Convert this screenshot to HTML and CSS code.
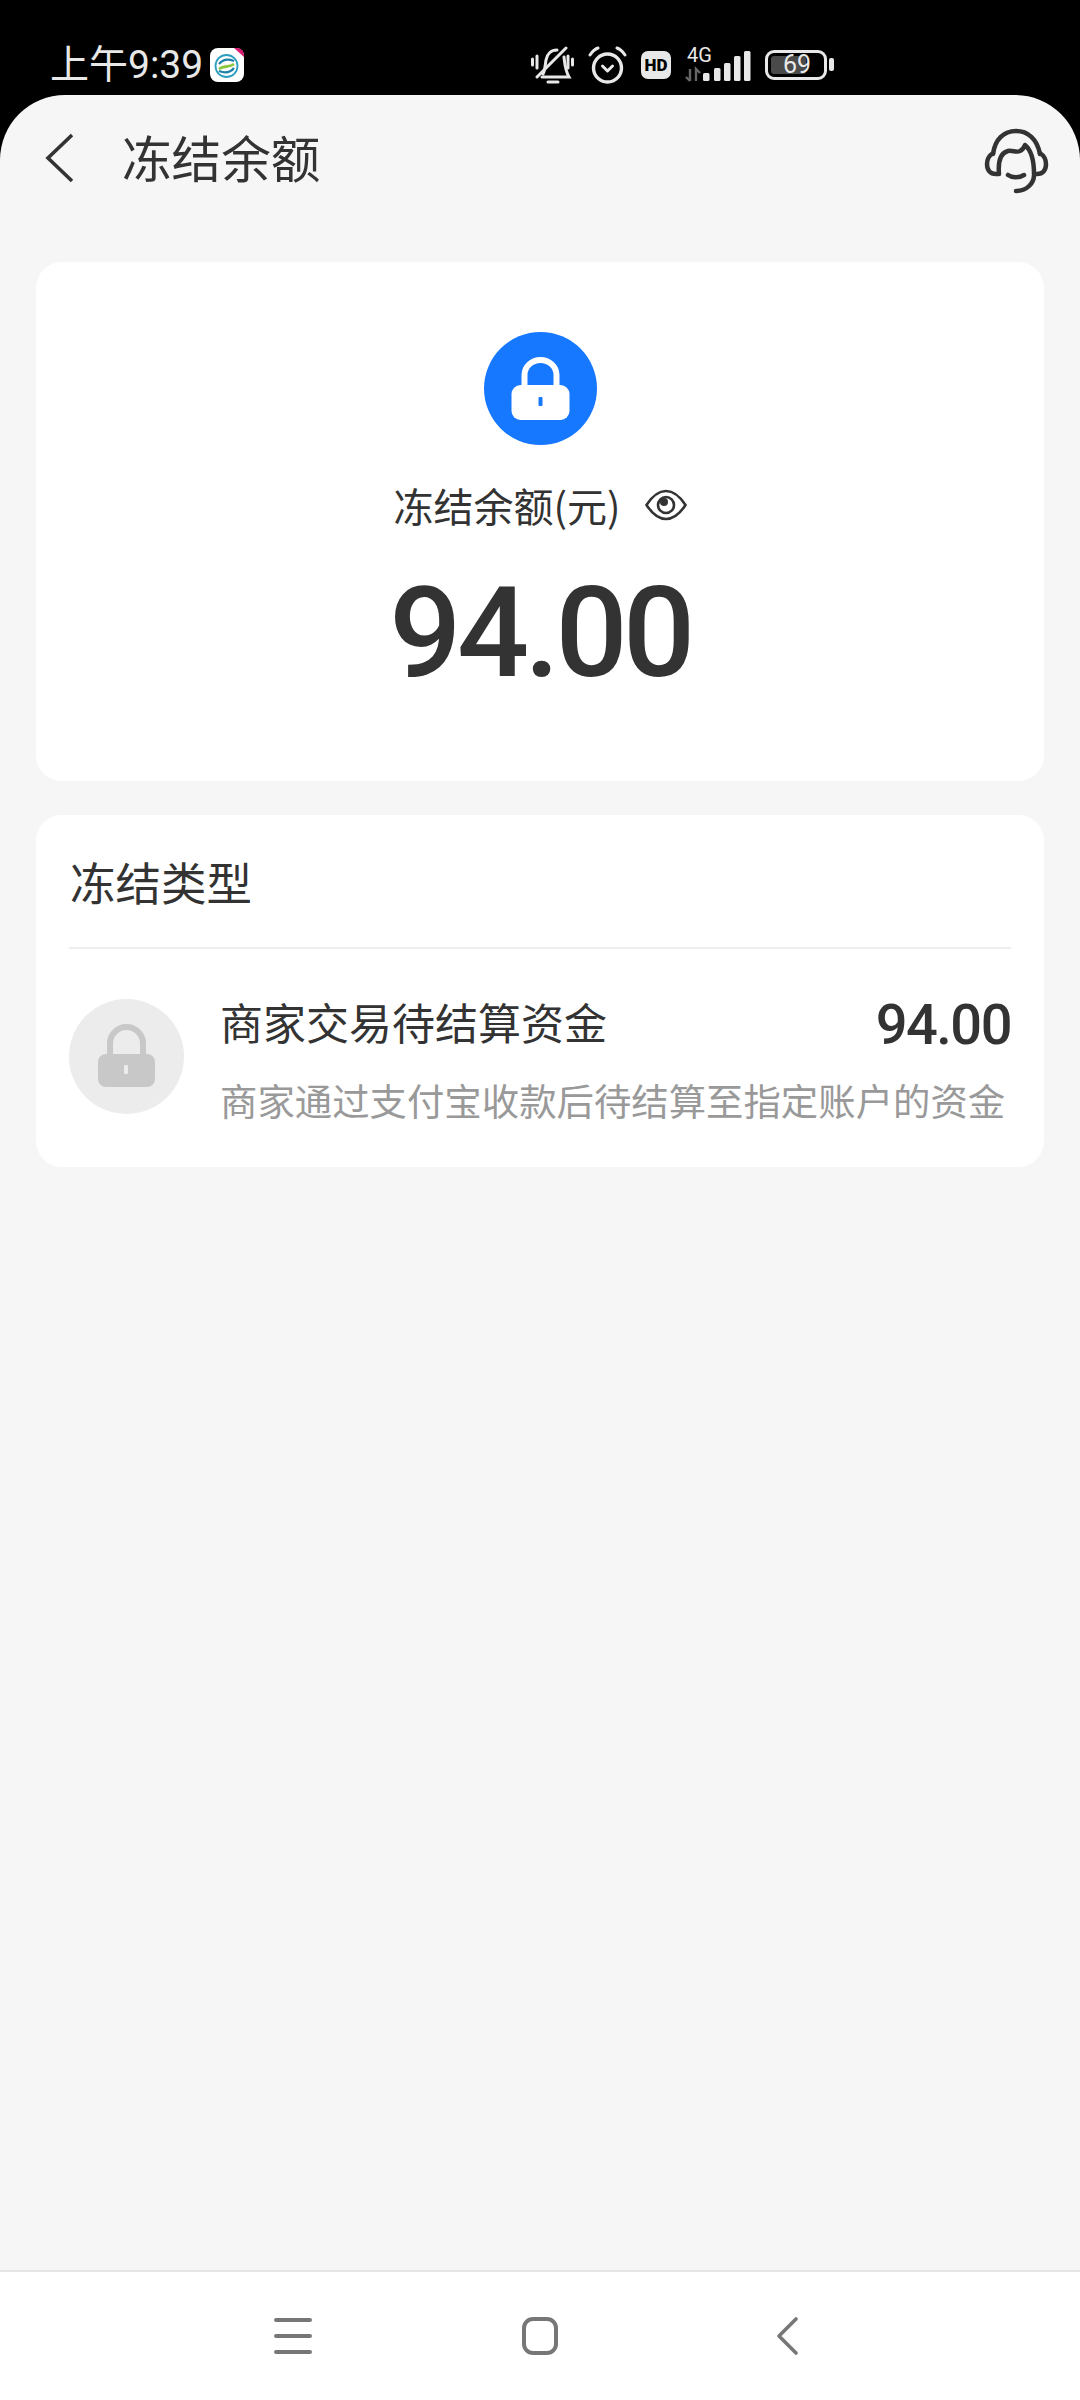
FILE: index.html
```html
<!DOCTYPE html>
<html lang="zh-CN">
<head>
    <meta charset="UTF-8">
    <meta name="viewport" content="width=device-width, initial-scale=1.0">
    <title>冻结余额</title>
    <link rel="stylesheet" href="styles.css">
</head>
<body>
    <div class="status">
        <div class="status-left">
            <span class="time">上午9:39</span>
            <svg class="carrier" width="36" height="36" viewBox="0 0 36 36">
                <rect x="1" y="1" width="34" height="34" rx="8" fill="#fff"/>
                <path d="M25 1h3a7 7 0 0 1 7 7v2z" fill="#d8196f"/>
                <circle cx="17.500" cy="19" r="11" fill="none" stroke="#2c9fc0" stroke-width="1.800"/>
                <path d="M10 17c4-5 10-5 15-3M25 21c-4 5-10 5-15 3" fill="none" stroke="#1c7fa8" stroke-width="2.200"/>
                <path d="M10 22c5-4 10-1 15-5" fill="none" stroke="#8cc63f" stroke-width="2.800"/>
            </svg>
        </div>
        <div class="status-right">
            <svg width="43" height="38" viewBox="0 0 43 38" fill="none" stroke="#e8e8e8" stroke-width="3" stroke-linecap="round">
                <path d="M1.500 13v6M6 10v12M37 10v12M41.500 13v6"/>
                <path d="M12 28c2-4 2-8 3-14 1-6 5-10 11-10"/>
                <path d="M33 11c1 8 1 13 5 20H11"/>
                <path d="M6 31 35 2"/>
                <path d="M17 36h10"/>
            </svg>
            <svg width="39" height="38" viewBox="0 0 39 38" fill="none" stroke="#e8e8e8" stroke-linecap="round" stroke-linejoin="round">
                <circle cx="19.500" cy="22" r="14" stroke-width="3.400"/>
                <path d="M14.500 20l5 5 5-5" stroke-width="3"/>
                <path d="M2 9c2-3 5-6 8-7M37 9c-2-3-5-6-8-7" stroke-width="3"/>
            </svg>
            <span class="hd">HD</span>
            <svg class="net" width="66" height="46" viewBox="0 0 66 46">
                <text x="2" y="20" class="net-text">4G</text>
                <path d="M5 27v12M1 35l4 4M11 39V27l4 4" fill="none" stroke="#666" stroke-width="2.400"/>
                <g fill="#e8e8e8">
                    <rect x="18" y="31" width="6.500" height="8" rx="1.500"/>
                    <rect x="29" y="26" width="6.500" height="13" rx="1.500"/>
                    <rect x="39" y="21" width="6.500" height="18" rx="1.500"/>
                    <rect x="49" y="14" width="6.500" height="25" rx="1.500"/>
                    <rect x="59" y="9" width="6.500" height="30" rx="1.500"/>
                </g>
            </svg>
            <div class="battery">
                <div class="battery-box">
                    <div class="battery-fill"></div>
                    <span class="battery-text">69</span>
                </div>
                <div class="battery-nub"></div>
            </div>
        </div>
    </div>

    <div class="panel">
        <div class="header">
            <div class="header-left">
                <svg width="28" height="50" viewBox="0 0 28 50" fill="none" stroke="#333" stroke-width="3.600">
                    <path d="M27 2 3 25l24 23"/>
                </svg>
                <span class="title">冻结余额</span>
            </div>
            <svg class="service" width="65" height="66" viewBox="0 0 65 66" fill="none" stroke="#333" stroke-width="4.500" stroke-linecap="round" stroke-linejoin="round">
                <path d="M9 26C11 11 20 3 32 3s21 8 24 23"/>
                <path d="M9 25c-3 2-6 6-6 11 0 6 3 10 9 10h3c-1-12 1-21 9-23 4-1 9 2 12 0 2-1 4-3 5-6 6 5 9 14 9 29h3c6 0 9-4 9-10 0-5-3-9-6-11"/>
                <path d="M50 47c0 8-7 16-18 16"/>
                <path d="M24 47c4 3 11 3 16 0"/>
            </svg>
        </div>

        <div class="content">
            <div class="card balance">
                <div class="lock-circle blue">
                    <svg width="113" height="113" viewBox="0 0 113 113">
                        <path d="M40.500 58V43a16 15 0 0 1 32 0v15" fill="none" stroke="#fff" stroke-width="6"/>
                        <rect x="27.500" y="53" width="58" height="35" rx="9" fill="#fff"/>
                        <rect x="54.500" y="65" width="4" height="9" rx="1" fill="#1677ff"/>
                    </svg>
                </div>
                <div class="balance-label">
                    <span>冻结余额(元)</span>
                    <svg width="42" height="32" viewBox="0 0 42 32" fill="none" stroke="#333" stroke-width="2.600">
                        <path d="M1.500 16 C8 6 14 2 21 2s13 4 19.500 14C34 26 28 30 21 30S8 26 1.500 16z"/>
                        <circle cx="21" cy="16" r="8"/>
                        <circle cx="19" cy="13" r="4" fill="#333" stroke="none"/>
                    </svg>
                </div>
                <div class="balance-num">94.00</div>
            </div>

            <div class="card types">
                <div class="types-title">冻结类型</div>
                <div class="type-row">
                    <div class="lock-circle grey">
                        <svg width="115" height="115" viewBox="0 0 115 115">
                            <path d="M41 60V44.500a16.500 16.500 0 0 1 33 0V60" fill="none" stroke="#c8c8c8" stroke-width="6"/>
                            <rect x="29" y="55" width="57" height="33" rx="8" fill="#c8c8c8"/>
                            <rect x="55" y="66" width="4" height="9" rx="1" fill="#ececec"/>
                        </svg>
                    </div>
                    <div class="type-info">
                        <div class="type-top">
                            <span class="type-name">商家交易待结算资金</span>
                            <span class="type-num">94.00</span>
                        </div>
                        <div class="type-desc">商家通过支付宝收款后待结算至指定账户的资金</div>
                    </div>
                </div>
            </div>
        </div>
    </div>

    <div class="nav">
        <svg width="60" height="44" viewBox="0 0 60 44" fill="none" stroke="#777" stroke-width="4" stroke-linecap="round">
            <path d="M13 6h34M13 22h34M13 38h34"/>
        </svg>
        <svg width="60" height="44" viewBox="0 0 60 44" fill="none" stroke="#777" stroke-width="4">
            <rect x="14" y="5" width="32" height="34" rx="9"/>
        </svg>
        <svg width="60" height="44" viewBox="0 0 60 44" fill="none" stroke="#777" stroke-width="3.600" stroke-linecap="round" stroke-linejoin="round">
            <path d="M39 5 22 22l17 17"/>
        </svg>
    </div>
</body>
</html>
```

FILE: styles.css
```css
* {
    box-sizing: border-box;
}
body {
    margin: 0;
    height: 2400px;
    display: flex;
    flex-direction: column;
    overflow: hidden;
    background-color: #000;
    font-family: "Noto Sans CJK SC", "Noto Sans", sans-serif;
    color: #333;
}

/* status bar */
.status {
    height: 95px;
    flex: none;
    display: flex;
    justify-content: space-between;
    align-items: center;
    padding: 34px 246px 0 50px;
    color: #e8e8e8;
}
.status-left {
    display: flex;
    align-items: center;
    gap: 6px;
}
.time {
    font-family: "Roboto", "Noto Sans CJK SC", sans-serif;
    font-size: 39px;
    line-height: 40px;
}
.status-right {
    display: flex;
    align-items: center;
    gap: 14px;
}
.hd {
    width: 30px;
    height: 28px;
    border-radius: 7px;
    background-color: #e8e8e8;
    color: #000;
    font-family: "Roboto", sans-serif;
    font-size: 17px;
    font-weight: 900;
    line-height: 28px;
    text-align: center;
}
.net-text {
    fill: #e8e8e8;
    font-family: "Roboto", sans-serif;
    font-size: 20px;
}
.battery {
    display: flex;
    align-items: center;
    gap: 2px;
}
.battery-box {
    width: 62px;
    height: 30px;
    padding: 3px;
    border: 3px solid #e8e8e8;
    border-radius: 9px;
    position: relative;
}
.battery-fill {
    width: 35px;
    height: 100%;
    border-radius: 3px;
    background-color: #4a4a4a;
}
.battery-text {
    position: absolute;
    top: 0;
    left: 15px;
    font-family: "Roboto", sans-serif;
    font-size: 25px;
    line-height: 24px;
}
.battery-nub {
    width: 5px;
    height: 13px;
    border-radius: 2px;
    background-color: #e8e8e8;
}

/* main panel */
.panel {
    flex: 1;
    border-radius: 65px 65px 0 0;
    background-color: #f6f6f6;
}
.header {
    height: 126px;
    display: flex;
    justify-content: space-between;
    align-items: center;
    padding: 0 31px 0 45px;
}
.header-left {
    display: flex;
    align-items: center;
    gap: 49px;
}
.title {
    padding-bottom: 5px;
    font-size: 49.600px;
    line-height: 60px;
}
.service {
    margin-top: 6px;
}
.content {
    padding: 41px 36px 0;
}
.card {
    border-radius: 26px;
    background-color: #fff;
}
.lock-circle {
    border-radius: 50%;
    flex: none;
}
.lock-circle svg {
    display: block;
}
.blue {
    background-color: #1677ff;
}
.grey {
    background-color: #ececec;
}

.balance {
    height: 519px;
    padding-top: 70px;
    display: flex;
    flex-direction: column;
    align-items: center;
}
.balance-label {
    display: flex;
    align-items: center;
    gap: 24px;
    margin-top: 36px;
    font-size: 40px;
    line-height: 48px;
}
.balance-num {
    margin-top: 41px;
    font-family: "Roboto", sans-serif;
    font-size: 127px;
    font-weight: 500;
    line-height: 126px;
    letter-spacing: -4.500px;
}

.types {
    height: 352px;
    margin-top: 34px;
    padding: 0 33px;
}
.types-title {
    height: 134px;
    padding: 36px 0 0 1px;
    border-bottom: 2px solid #eee;
    font-size: 45.500px;
    line-height: 60px;
}
.type-row {
    display: flex;
    align-items: flex-start;
    gap: 36px;
    padding-top: 50px;
}
.type-info {
    flex: 1;
}
.type-top {
    display: flex;
    justify-content: space-between;
    align-items: center;
    height: 44px;
}
.type-name {
    font-size: 43px;
    line-height: 44px;
}
.type-num {
    padding-top: 7px;
    font-family: "Roboto", sans-serif;
    font-size: 56px;
    font-weight: 500;
    line-height: 44px;
    letter-spacing: -1.500px;
}
.type-desc {
    margin-top: 35px;
    color: #999;
    font-size: 37.400px;
    line-height: 44px;
    white-space: nowrap;
}

/* bottom buttons */
.nav {
    height: 130px;
    flex: none;
    display: flex;
    justify-content: center;
    align-items: center;
    gap: 187px;
    border-top: 2px solid #e6e6e6;
    background-color: #fff;
}
```
